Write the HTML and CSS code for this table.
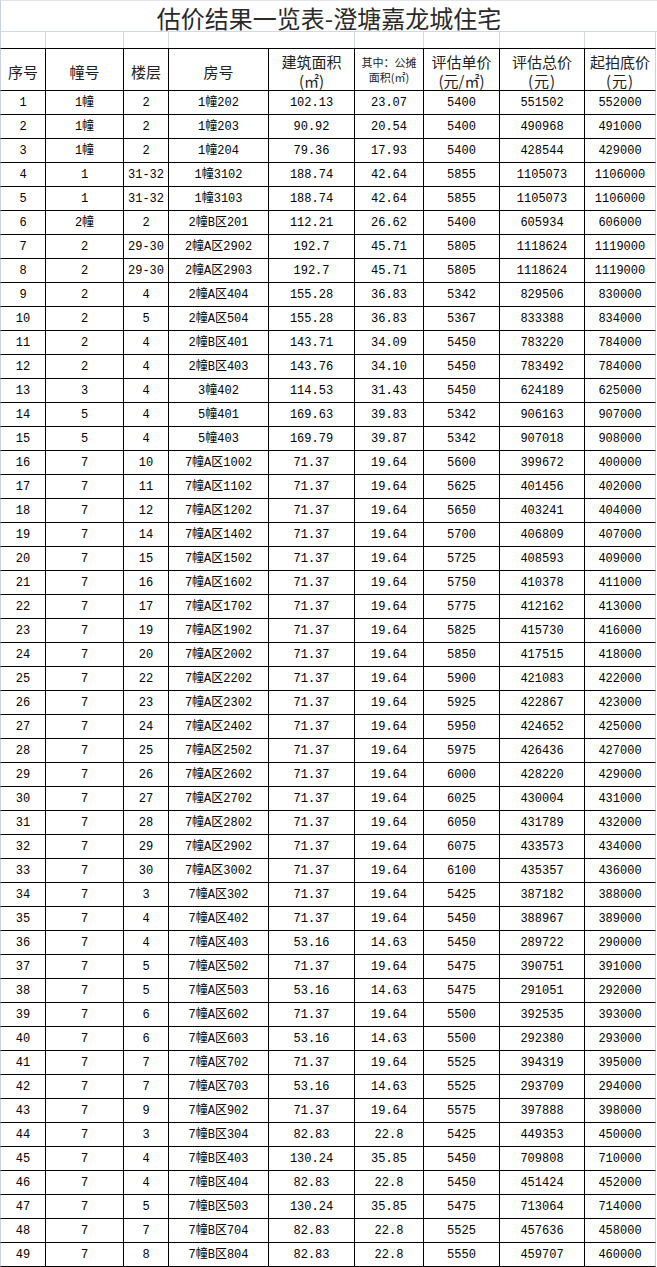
FILE: index.html
```html
<!DOCTYPE html>
<html lang="zh-CN">
<head>
<meta charset="utf-8">
<title>估价结果一览表-澄塘嘉龙城住宅</title>
<link rel="stylesheet" href="styles.css">
</head>
<body>
<div class="sheet">
  <div class="title">估价结果一览表-澄塘嘉龙城住宅</div>
  <div class="spacer">
    <span></span><span></span><span></span><span></span><span></span><span></span><span></span><span></span>
  </div>
  <table class="grid">
    <colgroup>
      <col class="c1"><col class="c2"><col class="c3"><col class="c4"><col class="c5"><col class="c6"><col class="c7"><col class="c8"><col class="c9">
    </colgroup>
    <thead>
      <tr class="head">
        <th>序号</th><th>幢号</th><th>楼层</th><th>房号</th>
        <th class="two"><span class="ln">建筑面积</span><span class="ln">(㎡)</span></th>
        <th class="two small"><span class="ln">其中：公摊</span><span class="ln">面积(㎡)</span></th>
        <th class="two"><span class="ln">评估单价</span><span class="ln">(元/㎡)</span></th>
        <th class="two"><span class="ln">评估总价</span><span class="ln paren">(元)</span></th>
        <th class="two"><span class="ln">起拍底价</span><span class="ln paren">(元)</span></th>
      </tr>
    </thead>
    <tbody>
      <tr><td>1</td><td>1幢</td><td>2</td><td>1幢202</td><td>102.13</td><td>23.07</td><td>5400</td><td>551502</td><td>552000</td></tr>
      <tr><td>2</td><td>1幢</td><td>2</td><td>1幢203</td><td>90.92</td><td>20.54</td><td>5400</td><td>490968</td><td>491000</td></tr>
      <tr><td>3</td><td>1幢</td><td>2</td><td>1幢204</td><td>79.36</td><td>17.93</td><td>5400</td><td>428544</td><td>429000</td></tr>
      <tr><td>4</td><td>1</td><td>31-32</td><td>1幢3102</td><td>188.74</td><td>42.64</td><td>5855</td><td>1105073</td><td>1106000</td></tr>
      <tr><td>5</td><td>1</td><td>31-32</td><td>1幢3103</td><td>188.74</td><td>42.64</td><td>5855</td><td>1105073</td><td>1106000</td></tr>
      <tr><td>6</td><td>2幢</td><td>2</td><td>2幢B区201</td><td>112.21</td><td>26.62</td><td>5400</td><td>605934</td><td>606000</td></tr>
      <tr><td>7</td><td>2</td><td>29-30</td><td>2幢A区2902</td><td>192.7</td><td>45.71</td><td>5805</td><td>1118624</td><td>1119000</td></tr>
      <tr><td>8</td><td>2</td><td>29-30</td><td>2幢A区2903</td><td>192.7</td><td>45.71</td><td>5805</td><td>1118624</td><td>1119000</td></tr>
      <tr><td>9</td><td>2</td><td>4</td><td>2幢A区404</td><td>155.28</td><td>36.83</td><td>5342</td><td>829506</td><td>830000</td></tr>
      <tr><td>10</td><td>2</td><td>5</td><td>2幢A区504</td><td>155.28</td><td>36.83</td><td>5367</td><td>833388</td><td>834000</td></tr>
      <tr><td>11</td><td>2</td><td>4</td><td>2幢B区401</td><td>143.71</td><td>34.09</td><td>5450</td><td>783220</td><td>784000</td></tr>
      <tr><td>12</td><td>2</td><td>4</td><td>2幢B区403</td><td>143.76</td><td>34.10</td><td>5450</td><td>783492</td><td>784000</td></tr>
      <tr><td>13</td><td>3</td><td>4</td><td>3幢402</td><td>114.53</td><td>31.43</td><td>5450</td><td>624189</td><td>625000</td></tr>
      <tr><td>14</td><td>5</td><td>4</td><td>5幢401</td><td>169.63</td><td>39.83</td><td>5342</td><td>906163</td><td>907000</td></tr>
      <tr><td>15</td><td>5</td><td>4</td><td>5幢403</td><td>169.79</td><td>39.87</td><td>5342</td><td>907018</td><td>908000</td></tr>
      <tr><td>16</td><td>7</td><td>10</td><td>7幢A区1002</td><td>71.37</td><td>19.64</td><td>5600</td><td>399672</td><td>400000</td></tr>
      <tr><td>17</td><td>7</td><td>11</td><td>7幢A区1102</td><td>71.37</td><td>19.64</td><td>5625</td><td>401456</td><td>402000</td></tr>
      <tr><td>18</td><td>7</td><td>12</td><td>7幢A区1202</td><td>71.37</td><td>19.64</td><td>5650</td><td>403241</td><td>404000</td></tr>
      <tr><td>19</td><td>7</td><td>14</td><td>7幢A区1402</td><td>71.37</td><td>19.64</td><td>5700</td><td>406809</td><td>407000</td></tr>
      <tr><td>20</td><td>7</td><td>15</td><td>7幢A区1502</td><td>71.37</td><td>19.64</td><td>5725</td><td>408593</td><td>409000</td></tr>
      <tr><td>21</td><td>7</td><td>16</td><td>7幢A区1602</td><td>71.37</td><td>19.64</td><td>5750</td><td>410378</td><td>411000</td></tr>
      <tr><td>22</td><td>7</td><td>17</td><td>7幢A区1702</td><td>71.37</td><td>19.64</td><td>5775</td><td>412162</td><td>413000</td></tr>
      <tr><td>23</td><td>7</td><td>19</td><td>7幢A区1902</td><td>71.37</td><td>19.64</td><td>5825</td><td>415730</td><td>416000</td></tr>
      <tr><td>24</td><td>7</td><td>20</td><td>7幢A区2002</td><td>71.37</td><td>19.64</td><td>5850</td><td>417515</td><td>418000</td></tr>
      <tr><td>25</td><td>7</td><td>22</td><td>7幢A区2202</td><td>71.37</td><td>19.64</td><td>5900</td><td>421083</td><td>422000</td></tr>
      <tr><td>26</td><td>7</td><td>23</td><td>7幢A区2302</td><td>71.37</td><td>19.64</td><td>5925</td><td>422867</td><td>423000</td></tr>
      <tr><td>27</td><td>7</td><td>24</td><td>7幢A区2402</td><td>71.37</td><td>19.64</td><td>5950</td><td>424652</td><td>425000</td></tr>
      <tr><td>28</td><td>7</td><td>25</td><td>7幢A区2502</td><td>71.37</td><td>19.64</td><td>5975</td><td>426436</td><td>427000</td></tr>
      <tr><td>29</td><td>7</td><td>26</td><td>7幢A区2602</td><td>71.37</td><td>19.64</td><td>6000</td><td>428220</td><td>429000</td></tr>
      <tr><td>30</td><td>7</td><td>27</td><td>7幢A区2702</td><td>71.37</td><td>19.64</td><td>6025</td><td>430004</td><td>431000</td></tr>
      <tr><td>31</td><td>7</td><td>28</td><td>7幢A区2802</td><td>71.37</td><td>19.64</td><td>6050</td><td>431789</td><td>432000</td></tr>
      <tr><td>32</td><td>7</td><td>29</td><td>7幢A区2902</td><td>71.37</td><td>19.64</td><td>6075</td><td>433573</td><td>434000</td></tr>
      <tr><td>33</td><td>7</td><td>30</td><td>7幢A区3002</td><td>71.37</td><td>19.64</td><td>6100</td><td>435357</td><td>436000</td></tr>
      <tr><td>34</td><td>7</td><td>3</td><td>7幢A区302</td><td>71.37</td><td>19.64</td><td>5425</td><td>387182</td><td>388000</td></tr>
      <tr><td>35</td><td>7</td><td>4</td><td>7幢A区402</td><td>71.37</td><td>19.64</td><td>5450</td><td>388967</td><td>389000</td></tr>
      <tr><td>36</td><td>7</td><td>4</td><td>7幢A区403</td><td>53.16</td><td>14.63</td><td>5450</td><td>289722</td><td>290000</td></tr>
      <tr><td>37</td><td>7</td><td>5</td><td>7幢A区502</td><td>71.37</td><td>19.64</td><td>5475</td><td>390751</td><td>391000</td></tr>
      <tr><td>38</td><td>7</td><td>5</td><td>7幢A区503</td><td>53.16</td><td>14.63</td><td>5475</td><td>291051</td><td>292000</td></tr>
      <tr><td>39</td><td>7</td><td>6</td><td>7幢A区602</td><td>71.37</td><td>19.64</td><td>5500</td><td>392535</td><td>393000</td></tr>
      <tr><td>40</td><td>7</td><td>6</td><td>7幢A区603</td><td>53.16</td><td>14.63</td><td>5500</td><td>292380</td><td>293000</td></tr>
      <tr><td>41</td><td>7</td><td>7</td><td>7幢A区702</td><td>71.37</td><td>19.64</td><td>5525</td><td>394319</td><td>395000</td></tr>
      <tr><td>42</td><td>7</td><td>7</td><td>7幢A区703</td><td>53.16</td><td>14.63</td><td>5525</td><td>293709</td><td>294000</td></tr>
      <tr><td>43</td><td>7</td><td>9</td><td>7幢A区902</td><td>71.37</td><td>19.64</td><td>5575</td><td>397888</td><td>398000</td></tr>
      <tr><td>44</td><td>7</td><td>3</td><td>7幢B区304</td><td>82.83</td><td>22.8</td><td>5425</td><td>449353</td><td>450000</td></tr>
      <tr><td>45</td><td>7</td><td>4</td><td>7幢B区403</td><td>130.24</td><td>35.85</td><td>5450</td><td>709808</td><td>710000</td></tr>
      <tr><td>46</td><td>7</td><td>4</td><td>7幢B区404</td><td>82.83</td><td>22.8</td><td>5450</td><td>451424</td><td>452000</td></tr>
      <tr><td>47</td><td>7</td><td>5</td><td>7幢B区503</td><td>130.24</td><td>35.85</td><td>5475</td><td>713064</td><td>714000</td></tr>
      <tr><td>48</td><td>7</td><td>7</td><td>7幢B区704</td><td>82.83</td><td>22.8</td><td>5525</td><td>457636</td><td>458000</td></tr>
      <tr><td>49</td><td>7</td><td>8</td><td>7幢B区804</td><td>82.83</td><td>22.8</td><td>5550</td><td>459707</td><td>460000</td></tr>
    </tbody>
  </table>
</div>
</body>
</html>
```
FILE: styles.css
```css
* {
  box-sizing: border-box;
}

html,
body {
  margin: 0;
  padding: 0;
  background: #ffffff;
}

body {
  font-family: "Noto Sans CJK SC", sans-serif;
  color: #000000;
  overflow: hidden;
}

.sheet {
  width: 657px;
}

.title {
  height: 32px;
  border-top: 1px solid #e2e6ec;
  border-bottom: 1px solid #d3d9e2;
  border-left: 1px solid #c9d1dd;
  padding-top: 3px;
  text-align: center;
  font-size: 24px;
  line-height: 27px;
  color: #2a2a2a;
  white-space: nowrap;
}

.spacer {
  display: grid;
  grid-template-columns: 45px 78px 45px 186px 69px 76px 85px 71px;
  height: 16px;
  border-left: 1px solid #c9d1dd;
}

.spacer span {
  border-right: 1px solid #d3d9e2;
}

.grid {
  border-collapse: separate;
  border-spacing: 0;
  table-layout: fixed;
  width: 656px;
}

.c1 { width: 46px; }
.c2 { width: 78px; }
.c3 { width: 45px; }
.c4 { width: 100px; }
.c5 { width: 86px; }
.c6 { width: 69px; }
.c7 { width: 76px; }
.c8 { width: 85px; }
.c9 { width: 71px; }

.grid th,
.grid td {
  padding: 0;
  border-right: 1px solid #000000;
  border-bottom: 1px solid #000000;
  text-align: center;
  vertical-align: middle;
  white-space: nowrap;
  overflow: hidden;
}

.grid th:first-child,
.grid td:first-child {
  border-left: 1px solid #c9d1dd;
}

.grid th:last-child,
.grid td:last-child {
  border-right: 1px solid #c9d1dd;
}

.grid th {
  height: 43px;
  border-top: 1px solid #000000;
  padding-top: 4px;
  font-weight: normal;
  font-size: 15px;
  line-height: 18px;
  color: #222222;
}

.grid th.two {
  vertical-align: top;
  padding-top: 3px;
}

.ln {
  display: block;
  height: 19px;
  line-height: 19px;
  overflow: hidden;
}

.grid th.small {
  padding-top: 6px;
  font-size: 11px;
}

.grid th.small .ln {
  height: 15px;
  line-height: 15px;
}

.paren {
  letter-spacing: 1px;
}

.grid td {
  height: 24px;
  font-family: "Liberation Mono", "Noto Sans CJK SC", monospace;
  font-size: 12px;
  line-height: 16px;
  padding-top: 1px;
  color: #000000;
}
```
